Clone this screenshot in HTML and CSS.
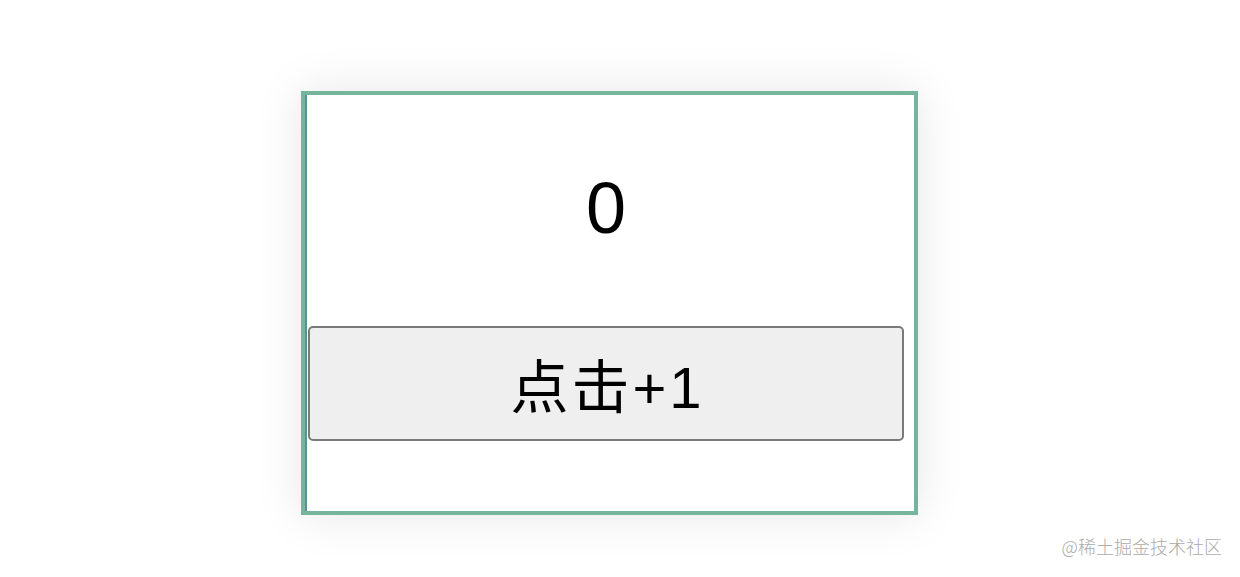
FILE: index.html
```html
<!DOCTYPE html>
<html lang="zh-CN">
<head>
    <meta charset="UTF-8">
    <meta name="viewport" content="width=device-width, initial-scale=1.0">
    <title>计数器</title>
    <link rel="stylesheet" href="styles.css">
</head>
<body>

<div class="stage">
    <div class="counter">
        <div class="count" id="count">0</div>
        <button class="button" id="add">点击+1</button>
    </div>
</div>

<div class="watermark">@稀土掘金技术社区</div>

<script>
    let count = 0;
    document.getElementById("add").addEventListener("click", () => {
        count++;
        document.getElementById("count").textContent = count;
    });
</script>

</body>
</html>
```

FILE: styles.css
```css
body {
    font-family: "Liberation Sans", "Noto Sans CJK SC", sans-serif;
    background-color: #fff;
    color: #000;
    margin: 0;
    padding: 0;
    width: 1240px;
    height: 577px;
    overflow: hidden;
}

.stage {
    padding: 91px 0 0 301px;
}

.counter {
    box-sizing: border-box;
    width: 617px;
    height: 424px;
    border: 4px solid #74b59b;
    background-color: #fff;
    box-shadow: inset 2px 0 0 #5b8fa0, 0 0 45px rgba(0, 0, 0, 0.1);
    display: flex;
    flex-direction: column;
    padding-top: 72px;
}

.count {
    font-size: 72px;
    line-height: 82px;
    text-align: center;
    padding-right: 7px;
}

.button {
    box-sizing: border-box;
    margin: 77px 0 0 3px;
    width: 596px;
    height: 115px;
    border: 2px solid #7a7a7a;
    border-radius: 5px;
    background-color: #efefef;
    font-family: "Liberation Sans", "Noto Sans CJK SC", sans-serif;
    font-size: 58px;
    letter-spacing: 3px;
    color: #000;
    padding: 0 0 2px 3px;
    cursor: pointer;
}

.watermark {
    position: absolute;
    right: 18px;
    bottom: 18px;
    font-family: "Noto Sans CJK SC", sans-serif;
    font-size: 18px;
    font-weight: 300;
    color: #ababab;
}
```
